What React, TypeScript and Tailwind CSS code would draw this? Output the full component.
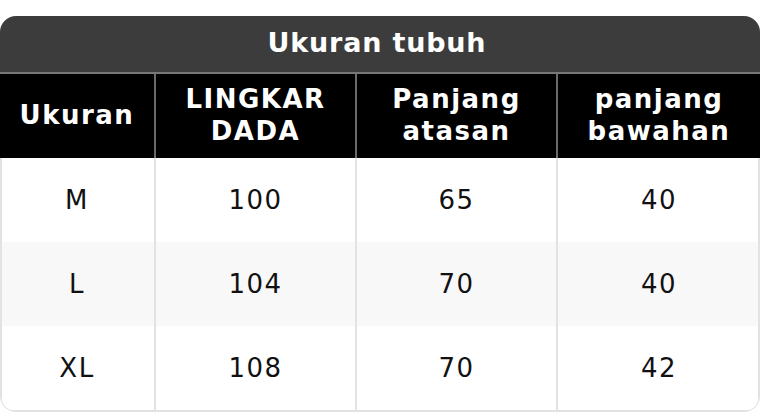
import React from "react";

const rows = [
  ["M", "100", "65", "40"],
  ["L", "104", "70", "40"],
  ["XL", "108", "70", "42"],
];

const headers = [["Ukuran"], ["LINGKAR", "DADA"], ["Panjang", "atasan"], ["panjang", "bawahan"]];

export default function App() {
  return (
    <div className="w-[760px] h-[412px] bg-white pt-[16px]" style={{ fontFamily: '"DejaVu Sans", sans-serif' }}>
      <div className="rounded-[16px] overflow-hidden tracking-[1.5px]">
        <div className="h-[56px] bg-[#3c3c3c] flex items-center justify-center text-white font-bold text-[27px] tracking-[0.8px] leading-none pb-[3px] pr-[6px]">
          Ukuran tubuh
        </div>
        <div className="h-[2px] bg-[#777]" />
        <div className="grid grid-cols-[154px_2px_199px_2px_199px_2px_1fr] h-[84px] bg-black text-white font-bold text-[26px] leading-[32px]">
          {headers.map((h, i) => (
            <React.Fragment key={i}>
              {i > 0 && <div className="bg-[#6a6a6a]" />}
              <div className="flex flex-col items-center justify-center text-center pb-[2px]">
                {h.map((l) => (
                  <span key={l}>{l}</span>
                ))}
              </div>
            </React.Fragment>
          ))}
        </div>
        <div className="border-x-2 border-b-2 border-[#e2e2e2] rounded-b-[14px] overflow-hidden">
          {rows.map((r, ri) => (
            <div
              key={ri}
              className={`grid grid-cols-[152px_2px_199px_2px_199px_2px_1fr] h-[84px] ${ri === 1 ? "bg-[#f8f8f8]" : "bg-white"} text-[#111] text-[26px]`}
            >
              {r.map((c, ci) => (
                <React.Fragment key={ci}>
                  {ci > 0 && <div className="bg-[#e2e2e2]" />}
                  <div className={`flex items-center justify-center ${ci === 0 ? "-ml-[2px]" : ""} ${ci === 3 ? "-mr-[2px]" : ""}`}>{c}</div>
                </React.Fragment>
              ))}
            </div>
          ))}
        </div>
      </div>
    </div>
  );
}
